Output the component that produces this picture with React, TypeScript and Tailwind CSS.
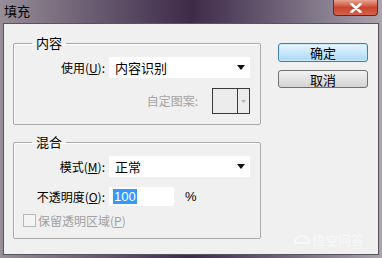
import React from "react";

const font = { fontFamily: '"Noto Sans CJK SC", "Liberation Sans", sans-serif' };

const Arrow = ({ color = "#111" }: { color?: string }) => (
  <svg width="8" height="5" viewBox="0 0 8 5">
    <path d="M0 0 H8 L4 5 Z" fill={color} />
  </svg>
);

const Select = ({ value }: { value: string }) => (
  <div className="flex h-[21px] w-[141px] items-center justify-between bg-white pl-[6px] pr-[5px] text-[13px] text-black">
    <span className="leading-none">{value}</span>
    <Arrow />
  </div>
);

const Group = ({ title, children }: { title: string; children: React.ReactNode }) => (
  <fieldset className="rounded-[2px] border border-[#a9a9a9] pb-[10px] pr-[10px] shadow-[inset_1px_1px_0_#fff]">
    <legend className="ml-[18px] px-[4px] text-[13px] leading-[16px] text-black">{title}</legend>
    {children}
  </fieldset>
);

export default function App() {
  return (
    <div
      className="flex h-[258px] w-[382px] flex-col overflow-hidden bg-gradient-to-r from-[#978e98] via-[#3e2b49] to-[#aaa4ae]"
      style={font}
    >
      {/* title bar */}
      <div className="flex h-[23px] shrink-0 items-start justify-between">
        <span className="pl-[4px] pt-[3px] text-[13px] leading-[16px] text-black">填充</span>
        <div className="mr-[4px] flex h-[16px] w-[45px] items-center justify-center rounded-b-[4px] border border-t-0 border-[#5a2a24] bg-gradient-to-b from-[#e8a393] via-[#c8452c] to-[#d6614a]">
          <svg width="12" height="10" viewBox="0 0 12 10">
            <path d="M1.5 1 L10.5 9 M10.5 1 L1.5 9" stroke="#fff" strokeWidth="2.6" strokeLinecap="round" />
          </svg>
        </div>
      </div>

      {/* client */}
      <div className="mx-[3px] mb-[3px] flex flex-1 gap-[17px] border border-[#5b5260] bg-[#f0f0f0] pl-[9px] pt-[11px]">
        <div className="flex w-[248px] flex-col gap-[9px]">
          <Group title="内容">
            <div className="mt-[6px] flex items-center">
              <span className="w-[95px] pr-[4px] text-right text-[12px] text-black">
                使用(<span className="underline">U</span>):
              </span>
              <Select value="内容识别" />
            </div>
            <div className="mt-[10px] flex items-center justify-end">
              <span className="mr-[14px] text-[12px] text-[#a3a3a3]">自定图案:</span>
              <div className="flex h-[26px] w-[38px] border border-[#3a3a3a] bg-[#ececec]">
                <div className="flex-1 border-r border-[#3a3a3a]" />
                <div className="flex w-[11px] items-center justify-center">
                  <svg width="5" height="3" viewBox="0 0 5 3">
                    <path d="M0 0 H5 L2.5 3 Z" fill="#b5b5b5" />
                  </svg>
                </div>
              </div>
            </div>
          </Group>

          <Group title="混合">
            <div className="mt-[6px] flex items-center">
              <span className="w-[95px] pr-[4px] text-right text-[12px] text-black">
                模式(<span className="underline">M</span>):
              </span>
              <Select value="正常" />
            </div>
            <div className="mt-[10px] flex items-center">
              <span className="w-[95px] pr-[4px] text-right text-[12px] text-black">
                不透明度(<span className="underline">O</span>):
              </span>
              <div className="flex h-[19px] w-[65px] items-center bg-white pl-[4px]">
                <span className="bg-[#3399ff] px-[1px] text-[13px] leading-[15px] text-white" style={{ fontFamily: '"Liberation Sans", sans-serif' }}>
                  100
                </span>
              </div>
              <span className="ml-[11px] text-[13px] text-black" style={{ fontFamily: '"Liberation Sans", sans-serif' }}>
                %
              </span>
            </div>
            <div className="ml-[9px] mt-[7px] flex items-center gap-[2px]">
              <div className="h-[13px] w-[13px] border border-[#b8b8b8] bg-[#f4f4f4]" />
              <span className="text-[12px] leading-[14px] text-[#a0a0a0]">
                保留透明区域(<span className="underline">P</span>)
              </span>
            </div>
          </Group>
        </div>

        <div className="flex flex-col pt-[8px]">
          <button className="h-[19px] w-[90px] rounded-[3px] border border-[#3c7fb1] bg-gradient-to-b from-[#eaf6fd] to-[#a7d9f5] text-[13px] leading-none text-black shadow-[inset_0_0_0_1px_#c9ecfd]">
            确定
          </button>
          <button className="mt-[8px] h-[18px] w-[90px] rounded-[3px] border border-[#707070] bg-gradient-to-b from-[#f2f2f2] to-[#d3d3d3] text-[13px] leading-none text-black">
            取消
          </button>
          <div className="mt-auto mb-[5px] ml-[16px] flex items-center gap-[2px] text-[13px] text-white/60">
            <svg width="16" height="12" viewBox="0 0 16 12">
              <path d="M1 10 Q1 3 8 3 Q15 3 15 10 Z" fill="none" stroke="#fff" strokeOpacity="0.6" strokeWidth="1.5" />
            </svg>
            <span>悟空问答</span>
          </div>
        </div>
      </div>
    </div>
  );
}
